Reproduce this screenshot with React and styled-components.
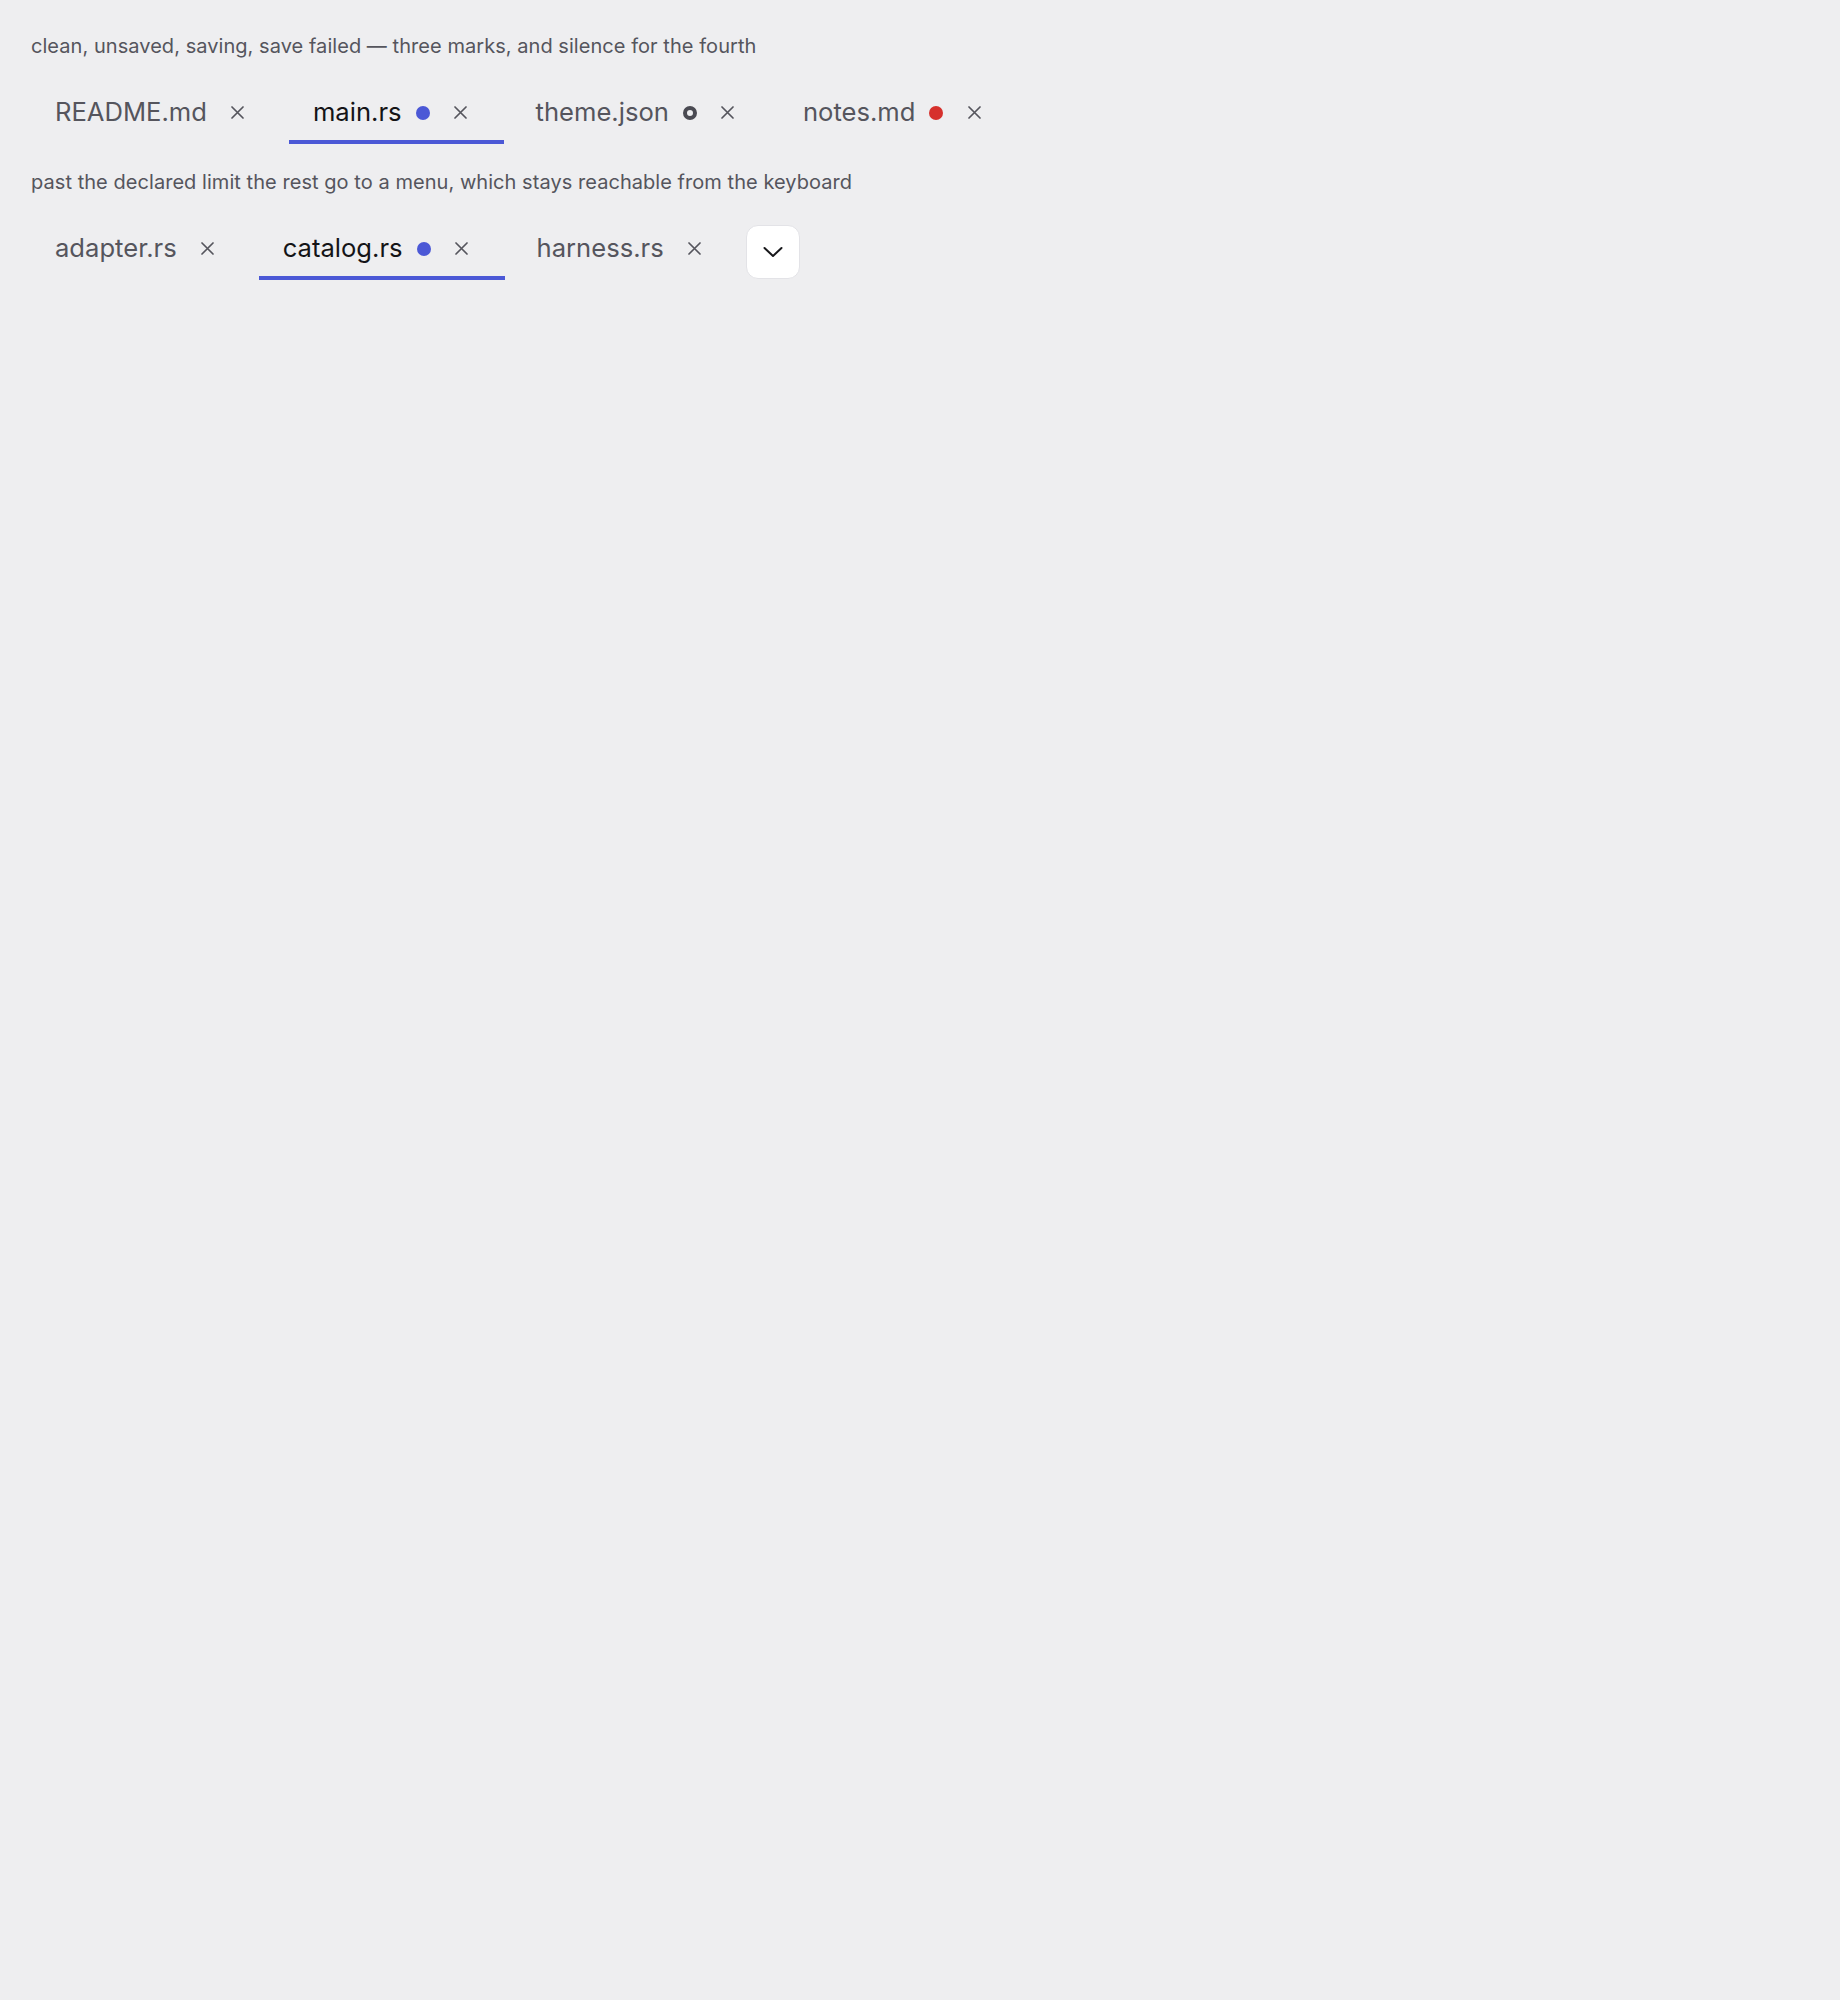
import React from "react";
import styled, { createGlobalStyle } from "styled-components";

const GlobalStyle = createGlobalStyle`
  html, body {
    margin: 0;
    background: #eeeef0;
  }
  body {
    font-family: Inter, "Noto Sans", "Liberation Sans", sans-serif;
  }
`;

export const Page = styled.div`
  min-height: 2000px;
  box-sizing: border-box;
  padding: 32px 31px;
  display: flex;
  flex-direction: column;
  gap: 24px;
`;

export const Section = styled.section`
  display: flex;
  flex-direction: column;
  gap: 20px;
`;

export const Caption = styled.p`
  margin: 0;
  font-size: 20px;
  line-height: 28px;
  letter-spacing: 0.05px;
  color: #55555d;
`;

export const TabList = styled.div`
  display: flex;
  align-items: flex-start;
  gap: 8px;
`;

export const Tab = styled.div`
  position: relative;
  height: 64px;
  box-sizing: border-box;
  padding: 17px 26px 0 24px;
  display: flex;
  align-items: flex-start;
  gap: 14px;
  color: ${(p) => (p.$active ? "#141417" : "#55555d")};
  &::after {
    content: "";
    position: absolute;
    left: 0;
    right: 0;
    bottom: 0;
    height: 4px;
    background: ${(p) => (p.$active ? "#4b58d6" : "transparent")};
  }
`;

export const Label = styled.span`
  font-size: 25.6px;
  line-height: 30px;
  white-space: nowrap;
`;

export const Mark = styled.span`
  width: 14px;
  height: 14px;
  margin-top: 9px;
  border-radius: 50%;
  box-sizing: border-box;
  flex-shrink: 0;
  background: ${(p) =>
    p.$state === "unsaved" ? "#4b58d6" : p.$state === "failed" ? "#d6302c" : "transparent"};
  border: ${(p) => (p.$state === "saving" ? "4px solid #4a4a52" : "none")};
`;

export const Close = styled.button`
  width: 34px;
  height: 30px;
  padding: 0;
  border: none;
  background: none;
  display: flex;
  align-items: center;
  justify-content: center;
  color: #55555d;
  cursor: pointer;
`;

export const Overflow = styled.button`
  width: 54px;
  height: 54px;
  margin-top: 9px;
  padding: 0;
  box-sizing: border-box;
  border: 1px solid #e3e3e7;
  border-radius: 12px;
  background: #fff;
  display: flex;
  align-items: center;
  justify-content: center;
  color: #18181b;
  cursor: pointer;
`;

const CloseIcon = () => (
  <svg width="13" height="13" viewBox="0 0 13 13" fill="none">
    <path d="M1 1l11 11M12 1L1 12" stroke="currentColor" strokeWidth="1.7" strokeLinecap="round" />
  </svg>
);

const Chevron = () => (
  <svg width="20" height="12" viewBox="0 0 20 12" fill="none">
    <path d="M1.5 2l8.5 8 8.5-8" stroke="currentColor" strokeWidth="2" strokeLinecap="round" strokeLinejoin="round" />
  </svg>
);

const first = [
  { name: "README.md" },
  { name: "main.rs", mark: "unsaved", active: true },
  { name: "theme.json", mark: "saving" },
  { name: "notes.md", mark: "failed" },
];

const second = [
  { name: "adapter.rs" },
  { name: "catalog.rs", mark: "unsaved", active: true },
  { name: "harness.rs" },
];

const TabItem = ({ name, mark, active }) => (
  <Tab $active={active}>
    <Label>{name}</Label>
    {mark && <Mark $state={mark} />}
    <Close aria-label={`close ${name}`}>
      <CloseIcon />
    </Close>
  </Tab>
);

const App = () => (
  <>
    <GlobalStyle />
    <Page>
      <Section>
        <Caption>clean, unsaved, saving, save failed — three marks, and silence for the fourth</Caption>
        <TabList>
          {first.map((t) => (
            <TabItem key={t.name} {...t} />
          ))}
        </TabList>
      </Section>
      <Section>
        <Caption>past the declared limit the rest go to a menu, which stays reachable from the keyboard</Caption>
        <TabList>
          {second.map((t) => (
            <TabItem key={t.name} {...t} />
          ))}
          <Overflow aria-label="more tabs">
            <Chevron />
          </Overflow>
        </TabList>
      </Section>
    </Page>
  </>
);

export default App;
